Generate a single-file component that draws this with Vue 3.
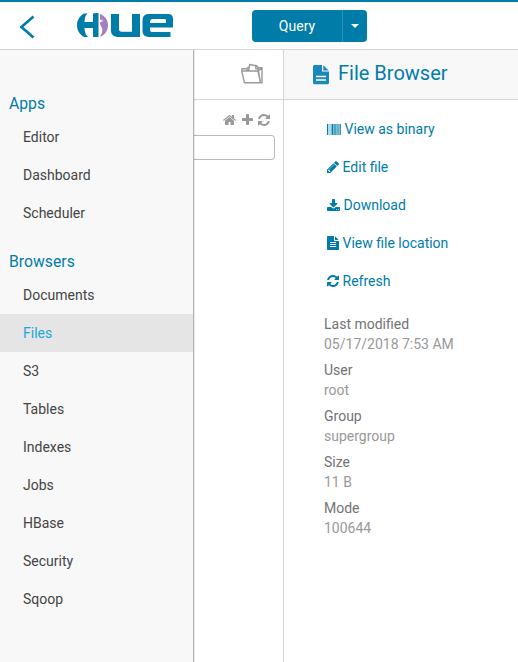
<script setup>
const sections = [
  { title: 'Apps', items: ['Editor', 'Dashboard', 'Scheduler'] },
  { title: 'Browsers', items: ['Documents', 'Files', 'S3', 'Tables', 'Indexes', 'Jobs', 'HBase', 'Security', 'Sqoop'] },
]
const icons = {
  refresh: { box: '128 128 1536 1536', w: 12, h: 12, d: 'M1639 1056q0 5-1 7-64 268-268 434.5t-478 166.5q-146 0-282.5-55t-243.5-157l-129 129q-19 19-45 19t-45-19-19-45v-448q0-26 19-45t45-19h448q26 0 45 19t19 45-19 45l-137 137q71 66 161 102t187 36q134 0 250-65t186-179q11-17 53-117 8-23 30-23h192q13 0 22.5 9.5t9.5 22.5zm25-800v448q0 26-19 45t-45 19h-448q-26 0-45-19t-19-45 19-45l138-138q-148-137-349-137-134 0-250 65t-186 179q-11 17-53 117-8 23-30 23h-199q-13 0-22.5-9.5t-9.5-22.5v-7q65-268 270-434.5t480-166.5q146 0 284 55.5t245 156.5l130-129q19-19 45-19t45 19 19 45z' },
  home: { box: '64 128 1664 1536', w: 13, h: 12, d: 'M1472 992v480q0 26-19 45t-45 19h-384v-384h-256v384h-384q-26 0-45-19t-19-45v-480q0-1 .5-3t.5-3l575-474 575 474q1 2 1 6zm223-69l-62 74q-8 9-21 11h-3q-13 0-21-7l-692-577-692 577q-12 8-24 7-13-2-21-11l-62-74q-8-10-7-23.5t11-21.5l719-599q32-26 76-26t76 26l244 204v-195q0-14 9-23t23-9h192q14 0 23 9t9 23v408l219 182q10 8 11 21.5t-7 23.5z' },
  plus: { box: '192 128 1408 1536', w: 11, h: 12, d: 'M1600 736v192q0 40-28 68t-68 28h-416v416q0 40-28 68t-68 28h-192q-40 0-68-28t-28-68v-416h-416q-40 0-68-28t-28-68v-192q0-40 28-68t68-28h416v-416q0-40 28-68t68-28h192q40 0 68 28t28 68v416h416q40 0 68 28t28 68z' },
  download: { box: '64 0 1664 1536', w: 13, h: 12, d: 'M1344 1344q0-26-19-45t-45-19-45 19-19 45 19 45 45 19 45-19 19-45zm256 0q0-26-19-45t-45-19-45 19-19 45 19 45 45 19 45-19 19-45zm128-224v320q0 40-28 68t-68 28h-1472q-40 0-68-28t-28-68v-320q0-40 28-68t68-28h465l135 136q58 56 136 56t136-56l136-136h464q40 0 68 28t28 68zm-325-569q17 41-14 70l-448 448q-18 19-45 19t-45-19l-448-448q-31-29-14-70 17-39 59-39h256v-448q0-26 19-45t45-19h256q26 0 45 19t19 45v448h256q42 0 59 39z' },
  pencil: { box: '128 128 1536 1536', w: 12, h: 12, d: 'M491 1536l91-91-235-235-91 91v107h128v128h107zm523-928q0-22-22-22-10 0-17 7l-542 542q-7 7-7 17 0 22 22 22 10 0 17-7l542-542q7-7 7-17zm-54-192l416 416-832 832h-416v-416zm683 96q0 53-37 90l-166 166-416-416 166-165q36-38 90-38 53 0 91 38l235 234q37 39 37 91z' },
  file: { box: '128 0 1536 1792', w: 12, h: 14, d: 'M1596 476q14 14 28 36h-472v-472q22 14 36 28zm-476 164h544v1056q0 40-28 68t-68 28h-1344q-40 0-68-28t-28-68v-1600q0-40 28-68t68-28h800v544q0 40 28 68t68 28zm160 736v-64q0-14-9-23t-23-9h-704q-14 0-23 9t-9 23v64q0 14 9 23t23 9h704q14 0 23-9t9-23zm0-256v-64q0-14-9-23t-23-9h-704q-14 0-23 9t-9 23v64q0 14 9 23t23 9h704q14 0 23-9t9-23zm0-256v-64q0-14-9-23t-23-9h-704q-14 0-23 9t-9 23v64q0 14 9 23t23 9h704q14 0 23-9t9-23z' },
  binary: { box: '0 0 14 11', w: 14, h: 11, d: 'M0 0h1v11H0zM1.300 0h.3v11h-.3zM2.300 0h.3v11h-.3zM3.300 0h.3v11h-.3zM4.200 0h.5v11h-.5zM5 0h1v11H5zM6.300 0h.5v11h-.5zM7.300 0h.7v11h-.7zM8 0h.7v11H8zM9.300 0h.5v11h-.5zM10.200 0h.6v11h-.6zM11 0h.6v11H11zM12.300 0h.5v11h-.5zM13.200 0h.8v11h-.8z' },
}
const tools = ['home', 'plus', 'refresh']
const actions = [
  { icon: 'binary', label: 'View as binary' },
  { icon: 'pencil', label: 'Edit file' },
  { icon: 'download', label: 'Download' },
  { icon: 'file', label: 'View file location' },
  { icon: 'refresh', label: 'Refresh' },
]
const details = [
  ['Last modified', '05/17/2018 7:53 AM'],
  ['User', 'root'],
  ['Group', 'supergroup'],
  ['Size', '11 B'],
  ['Mode', '100644'],
]
</script>

<template>
  <div class="page">
    <header class="topbar">
      <svg class="back" width="16" height="24" viewBox="0 0 16 24"><path d="M13.500 1.500 1.500 12l12 10.500" /></svg>
      <svg class="logo" width="97" height="26" viewBox="0 0 97 26">
        <path class="blue" d="M10.500 1.600C8.300 3.500 7.600 6.500 7.500 10H16V1.500C17.500.9 19 .8 21.500 1v24H16V16H7.500c.1 3.500 1 6.800 3.500 9H7C2.500 22.500 0 18.300 0 13.300S2.500 4 7 1.600Z" />
        <path class="purple" d="M23 2c5 1.700 8 6 8 11.300 0 5-2.800 9.700-8 11.700 1.700-3 2.500-5.500 2.300-8-.2-2.300-2.300-3.300-2.300-5.500Z" />
        <path class="light" d="m23 7.300 1.300 1 1.500-1-.6 1.500 1 1-1.500-.3-1.700 1Z" />
        <path class="blue" d="M34 2h8v15c0 2 .8 2.700 2.700 2.700H55V2h8v23H42c-5 0-8-2-8-6.500Z" />
        <path class="blue" fill-rule="evenodd" d="M72 2h19c3.500 0 5 1.800 5 4.500v9H73v2c0 2 .8 2.600 3 2.600h17.500V25H73c-5 0-7.500-2-7.500-6.500V9c0-4.500 2-7 6.500-7Zm1 9h16V8.500c0-1-.5-1.500-1.500-1.500H76c-2 0-3 .8-3 2.700Z" />
      </svg>
      <div class="query">
        <button class="query-main">Query</button>
        <button class="query-menu"><svg width="8" height="4" viewBox="0 0 8 4"><path d="M0 0h8L4 4Z" /></svg></button>
      </div>
    </header>
    <div class="body">
      <nav class="sidebar">
        <section v-for="s in sections" :key="s.title" class="group">
          <h2>{{ s.title }}</h2>
          <a v-for="i in s.items" :key="i" :class="{ active: i === 'Files' }">{{ i }}</a>
        </section>
      </nav>
      <section class="assist">
        <div class="assist-head">
          <svg width="24" height="22" viewBox="0 0 24 22">
            <path d="M4.500 19.800 1.700 8H18l2.500 11.800ZM2 8V5.800h4.700L8 8M8.500 7.500 9.700 1.500l7 1.300 2 2.200-.7 3M15.800 2.800v3h2.700M5.500 5.800l3-1.500M18.700 4.800h3.300v15h-1.500L18.500 8l3-2.500" />
          </svg>
        </div>
        <div class="tools">
          <svg v-for="t in tools" :key="t" :width="icons[t].w" :height="icons[t].h" :viewBox="icons[t].box"><path :d="icons[t].d" /></svg>
        </div>
        <div class="search"></div>
      </section>
      <main class="browser">
        <div class="title">
          <svg width="16" height="20" viewBox="0 0 16 20">
            <path d="M1 0h8v6.500h7V18.300l-1 1H1l-1-1V1ZM10.300.3 15.700 5.400h-5.400Z" />
            <path class="lines" d="M3 11.500h10M3 15h10" />
          </svg>
          <h1>File Browser</h1>
        </div>
        <div class="actions">
          <a v-for="a in actions" :key="a.label">
            <svg :width="icons[a.icon].w" :height="icons[a.icon].h" :viewBox="icons[a.icon].box"><path :d="icons[a.icon].d" /></svg>
            <span>{{ a.label }}</span>
          </a>
        </div>
        <dl>
          <template v-for="d in details" :key="d[0]">
            <dt>{{ d[0] }}</dt>
            <dd>{{ d[1] }}</dd>
          </template>
        </dl>
      </main>
    </div>
  </div>
</template>

<style>
body { margin: 0; background: #fff; }
</style>
<style scoped>
.page { width: 518px; height: 662px; display: flex; flex-direction: column; overflow: hidden; font: 14px/20px Roboto, sans-serif; color: #444; }
.page * { box-sizing: border-box; }
svg { display: block; flex: none; }
h1, h2, dl, dd { margin: 0; font-weight: 400; }
.topbar { height: 50px; flex: none; display: flex; align-items: flex-start; border-top: 2px solid #007ca9; border-bottom: 1px solid #d5d5d5; padding-left: 20px; }
.back { margin-top: 13px; fill: none; stroke: #007ca9; stroke-width: 2.6; }
.logo { margin: 10px 0 0 41px; }
.blue { fill: #007ca9; }
.purple { fill: #a77dc2; }
.light { fill: #fff; }
.query { display: flex; width: 115px; height: 32px; margin: 8px 0 0 78px; border-radius: 4px; overflow: hidden; }
.query button { border: 0; padding: 0; background: #007ca9; color: #fff; font: 14px/32px Roboto, sans-serif; }
.query-main { width: 90px; }
.query .query-menu { width: 25px; border-left: 1px solid #2a92b8; display: flex; align-items: center; justify-content: center; }
.query-menu path { fill: #fff; }
.body { flex: 1; display: flex; min-height: 0; }
.sidebar { width: 194px; background: #f8f8f8; border-right: 1px solid #b4b4b4; box-shadow: 1px 0 1px rgba(0, 0, 0, .08); padding-top: 39px; z-index: 1; }
.group { margin-bottom: 15px; }
.group h2 { font-size: 15.75px; line-height: 29px; padding-left: 9px; color: #007ca9; }
.group a { display: block; height: 38px; line-height: 38px; padding-left: 23px; }
.group a.active { background: #e5e5e5; color: #1aa8d6; }
.assist { width: 90px; border-right: 1px solid #d5d5d5; }
.assist-head { height: 50px; border-bottom: 1px solid #d5d5d5; padding: 13px 0 0 46px; }
.assist-head svg { fill: none; stroke: #999; stroke-width: 1.4; stroke-linejoin: round; }
.tools { display: flex; height: 35px; gap: 5.500px; padding: 14px 0 0 29px; }
.tools path { fill: #999; }
.search { width: 81px; height: 25px; border: 1px solid #bbb; border-left: 0; border-radius: 0 4px 4px 0; }
.browser { flex: 1; }
.title { height: 50px; background: #f8f8f8; border-bottom: 1px solid #d5d5d5; display: flex; padding: 15px 0 0 29px; gap: 9px; }
.title svg { fill: #1a87bd; }
.title .lines { stroke: #fff; stroke-width: 1.3; }
.title h1 { font-size: 20px; line-height: 16px; color: #007ca9; }
.actions { padding: 10px 0 0 43px; }
.actions a { display: flex; align-items: center; gap: 3.500px; height: 38px; color: #007ca9; }
.actions path { fill: #007ca9; }
dl { padding: 14px 0 0 40px; }
dt { color: #737373; }
dd { color: #999; margin-bottom: 6px; }
</style>
